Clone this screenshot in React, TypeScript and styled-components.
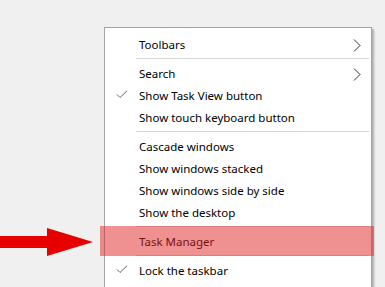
import React from 'react';
import styled, { createGlobalStyle } from 'styled-components';

const GlobalStyle = createGlobalStyle`
  html, body {
    margin: 0;
    padding: 0;
    background: #f0f0f0;
    overflow: hidden;
  }
`;

const Page = styled.div`
  width: 385px;
  height: 287px;
  overflow: hidden;
  padding: 27px 0 0 104px;
  box-sizing: border-box;
  font-family: 'Noto Sans', 'Open Sans', sans-serif;
  font-size: 11.5px;
  color: #000;
`;

const Menu = styled.div`
  width: 268px;
  box-sizing: border-box;
  background: #fff;
  border: 1px solid #a3a3a3;
  box-shadow: 2px 2px 2px rgba(0, 0, 0, 0.28);
  padding: 5px 0 20px;
`;

const Row = styled.div<{ $highlight?: boolean }>`
  position: relative;
  display: flex;
  align-items: center;
  height: 22px;
  padding: 0 10px 0 34px;

  ${({ $highlight }) =>
    $highlight &&
    `
    &::after {
      content: '';
      position: absolute;
      top: -4px;
      bottom: -4px;
      left: -5px;
      right: -3px;
      background: rgba(226, 36, 36, 0.5);
      z-index: 1;
    }
  `}
`;

const Label = styled.span`
  flex: 1;
  white-space: nowrap;
`;

const CheckSlot = styled.span`
  position: absolute;
  left: 11px;
  top: 6px;
  display: flex;
`;

const Chevron = styled.span`
  display: flex;
  margin-top: 2px;
`;

const Separator = styled.div`
  height: 1px;
  background: #d6d6d6;
  margin: 3px 2px 3px 31px;
`;

const Arrow = styled.svg`
  position: absolute;
  top: -2px;
  right: calc(100% + 12px);
  z-index: 2;
`;

const Check = () => (
  <svg width="12" height="9" viewBox="0 0 12 9">
    <path d="M1 4.5 L4 7.5 L11 0.8" fill="none" stroke="#666" strokeWidth="1" />
  </svg>
);

const Sub = () => (
  <svg width="8" height="13" viewBox="0 0 8 13">
    <path d="M1 0.5 L7 6.5 L1 12.5" fill="none" stroke="#333" strokeWidth="1" />
  </svg>
);

type Item =
  | { kind: 'sep' }
  | { kind: 'item'; label: string; checked?: boolean; sub?: boolean; highlight?: boolean };

const items: Item[] = [
  { kind: 'item', label: 'Toolbars', sub: true },
  { kind: 'sep' },
  { kind: 'item', label: 'Search', sub: true },
  { kind: 'item', label: 'Show Task View button', checked: true },
  { kind: 'item', label: 'Show touch keyboard button' },
  { kind: 'sep' },
  { kind: 'item', label: 'Cascade windows' },
  { kind: 'item', label: 'Show windows stacked' },
  { kind: 'item', label: 'Show windows side by side' },
  { kind: 'item', label: 'Show the desktop' },
  { kind: 'sep' },
  { kind: 'item', label: 'Task Manager', highlight: true },
  { kind: 'sep' },
  { kind: 'item', label: 'Lock the taskbar', checked: true },
];

const App: React.FC = () => {
  return (
    <>
      <GlobalStyle />
      <Page>
        <Menu>
          {items.map((it, i) =>
            it.kind === 'sep' ? (
              <Separator key={i} />
            ) : (
              <Row key={i} $highlight={it.highlight}>
                {it.checked && (
                  <CheckSlot>
                    <Check />
                  </CheckSlot>
                )}
                <Label>{it.label}</Label>
                {it.sub && (
                  <Chevron>
                    <Sub />
                  </Chevron>
                )}
                {it.highlight && (
                  <Arrow width="93" height="29" viewBox="0 0 93 29">
                    <polygon points="0,8 47,8 47,0 93,14 47,28 47,20 0,20" fill="#e60000" />
                  </Arrow>
                )}
              </Row>
            )
          )}
        </Menu>
      </Page>
    </>
  );
};

export default App;
